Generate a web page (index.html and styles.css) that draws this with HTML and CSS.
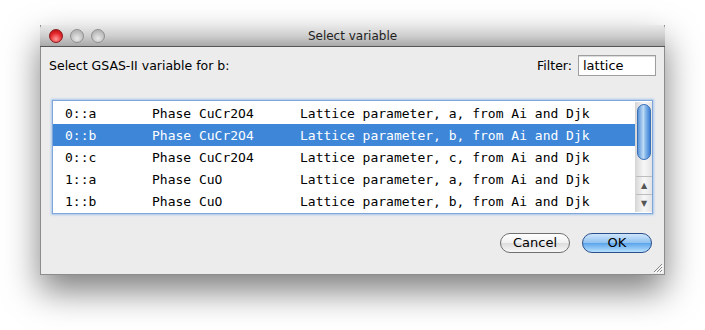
FILE: index.html
```html
<!DOCTYPE html>
<html lang="en">

<head>
    <meta charset="UTF-8">
    <meta name="viewport" content="width=device-width, initial-scale=1.0">
    <title>Select variable</title>
    <link rel="stylesheet" href="styles.css">
</head>

<body>
    <div class="window">
        <div class="titlebar">
            <div class="lights">
                <span class="light red"></span>
                <span class="light"></span>
                <span class="light"></span>
            </div>
            <div class="title">Select variable</div>
        </div>

        <div class="content">
            <div class="top-row">
                <div class="label">Select GSAS-II variable for b:</div>
                <div class="filter">
                    <span>Filter:</span>
                    <div class="input">lattice</div>
                </div>
            </div>

            <div class="list">
                <div class="rows">
                    <div class="row"><span class="c1">0::a</span><span class="c2">Phase CuCr2O4</span><span>Lattice parameter, a, from Ai and Djk</span></div>
                    <div class="row selected"><span class="c1">0::b</span><span class="c2">Phase CuCr2O4</span><span>Lattice parameter, b, from Ai and Djk</span></div>
                    <div class="row"><span class="c1">0::c</span><span class="c2">Phase CuCr2O4</span><span>Lattice parameter, c, from Ai and Djk</span></div>
                    <div class="row"><span class="c1">1::a</span><span class="c2">Phase CuO</span><span>Lattice parameter, a, from Ai and Djk</span></div>
                    <div class="row"><span class="c1">1::b</span><span class="c2">Phase CuO</span><span>Lattice parameter, b, from Ai and Djk</span></div>
                </div>
                <div class="scrollbar">
                    <div class="track">
                        <div class="thumb"></div>
                    </div>
                    <div class="arrow">&#9650;</div>
                    <div class="arrow">&#9660;</div>
                </div>
            </div>

            <div class="buttons">
                <div class="btn">Cancel</div>
                <div class="btn default">OK</div>
            </div>
        </div>

        <svg class="grip" width="12" height="12" viewBox="0 0 12 12">
            <path d="M11 3 L3 11 M11 6 L6 11 M11 9 L9 11" stroke="#888" stroke-width="1" />
            <path d="M12 4 L4 12 M12 7 L7 12 M12 10 L10 12" stroke="#fff" stroke-width="1" />
        </svg>
    </div>
</body>

</html>
```

FILE: styles.css
```css
html,
body {
    min-height: 330px;
}

body {
    margin: 0;
    padding-top: 25px;
    box-sizing: border-box;
    background: #fff;
    font-family: "Lucida Grande", "DejaVu Sans", sans-serif;
    font-size: 12px;
    color: #000;
}

.window {
    position: relative;
    width: 625px;
    height: 250px;
    margin-left: 40px;
    background: #ececec;
    border: 1px solid #8c8c8c;
    border-top: none;
    box-sizing: border-box;
    display: flex;
    flex-direction: column;
    box-shadow: 0 16px 32px rgba(0, 0, 0, 0.5);
}

.titlebar {
    height: 22px;
    box-sizing: border-box;
    background: linear-gradient(#e9e9e9, #cfcfcf 50%, #a9a9a9);
    border-bottom: 1px solid #555;
    border-radius: 4px 4px 0 0;
    margin: 0 -1px;
    display: flex;
    align-items: center;
    position: relative;
}

.lights {
    display: flex;
    gap: 7px;
    padding-left: 9px;
}

.light {
    width: 12px;
    height: 12px;
    border-radius: 50%;
    background: radial-gradient(circle at 50% 70%, #eaeaea, #b8b8b8 70%);
    border: 1px solid #8f8f8f;
}

.light.red {
    background: radial-gradient(circle at 50% 75%, #ff9a9a, #e5252a 55%, #a80d12);
    border-color: #8a1a1a;
}

.title {
    position: absolute;
    left: 0;
    right: 0;
    text-align: center;
    font-size: 12px;
    color: #222;
}

.content {
    flex: 1;
    display: flex;
    flex-direction: column;
    padding: 7px 11px 0 11px;
}

.top-row {
    display: flex;
    justify-content: space-between;
    align-items: center;
    height: 22px;
}

.label {
    margin-left: -3px;
    font-size: 12.5px;
}

.filter {
    display: flex;
    align-items: center;
    gap: 6px;
    margin-right: -3px;
    font-size: 12.5px;
}

.input {
    width: 72px;
    height: 19px;
    background: #fff;
    border: 1px solid #9e9e9e;
    box-shadow: inset 0 1px 1px rgba(0, 0, 0, 0.15);
    padding-left: 4px;
    line-height: 19px;
    font-size: 13px;
}

.list {
    margin-top: 24px;
    height: 114px;
    display: flex;
    background: #fff;
    border: 1px solid #7fa6d8;
    box-shadow: 0 0 2px 1px #a9c6ec;
    box-sizing: border-box;
    padding: 1px 0;
}

.rows {
    flex: 1;
}

.row {
    display: flex;
    height: 22px;
    align-items: center;
    padding-left: 12px;
    font-family: "DejaVu Sans Mono", monospace;
    font-size: 13px;
}

.row.selected {
    background: #3d86d8;
    color: #fff;
}

.c1 {
    width: 87px;
}

.c2 {
    width: 148px;
}

.scrollbar {
    width: 16px;
    display: flex;
    flex-direction: column;
    border-left: 1px solid #d6d6d6;
    background: linear-gradient(90deg, #dadada, #f7f7f7 50%, #e4e4e4);
}

.track {
    flex: 1;
    padding: 2px 1px 0 1px;
}

.thumb {
    height: 54px;
    border-radius: 8px;
    border: 1px solid #3a6fb8;
    background: linear-gradient(90deg, #5c95d9, #bfdcf6 45%, #8cbcec 60%, #3b7fd4);
}

.arrow {
    height: 17px;
    border-top: 1px solid #bdbdbd;
    font-size: 8px;
    color: #555;
    text-align: center;
    line-height: 17px;
}

.buttons {
    display: flex;
    justify-content: flex-end;
    gap: 12px;
    margin-top: 19px;
    padding-right: 1px;
}

.btn {
    width: 70px;
    height: 20px;
    box-sizing: border-box;
    border-radius: 10px;
    border: 1px solid #6f6f6f;
    background: linear-gradient(#ffffff, #f0f0f0 50%, #dcdcdc 51%, #f8f8f8);
    text-align: center;
    line-height: 18px;
    font-size: 13px;
}

.btn.default {
    border-color: #2c4f8a;
    background: linear-gradient(#cfe5fb, #8ec1f0 50%, #5aa4ea 51%, #b8e0fe);
}

.grip {
    position: absolute;
    right: 1px;
    bottom: 1px;
}
```
